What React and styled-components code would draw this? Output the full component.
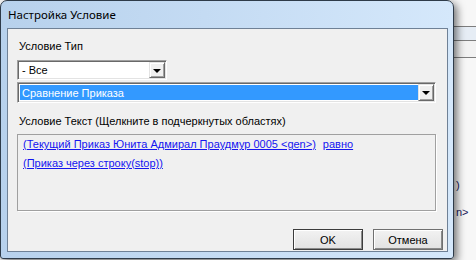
import React from 'react';
import styled, { createGlobalStyle } from 'styled-components';

const Global = createGlobalStyle`
  html, body { margin: 0; padding: 0; background: #f3f3f3; }
  body { font-family: "Liberation Sans", Arial, sans-serif; }
`;

const Desktop = styled.div`
  width: 476px;
  height: 260px;
  overflow: hidden;
  display: flex;
  align-items: flex-start;
  background: #f4f4f4;
`;

const Window = styled.div`
  position: relative;
  z-index: 1;
  flex: 0 0 auto;
  width: 454px;
  height: 259px;
  box-sizing: border-box;
  border: 1px solid #2e3b49;
  border-radius: 7px 7px 3px 3px;
  background: linear-gradient(to right, #b7d1ec 0%, #c4dbf3 45%, #d5e8fb 100%);
  box-shadow: 3px 3px 9px rgba(0, 0, 0, 0.55);
  display: flex;
  flex-direction: column;
  padding: 0 5px 6px 6px;
`;

const TitleBar = styled.div`
  height: 27px;
  display: flex;
  align-items: center;
  padding-left: 1px;
  font-family: "Noto Sans", "Open Sans", sans-serif;
  font-size: 11.5px;
  color: #000;
`;

const Client = styled.div`
  flex: 1;
  border: 1px solid #6f8196;
  background: #f0f0f0;
  display: flex;
  flex-direction: column;
  font-size: 11px;
  color: #000;
`;

const Label = styled.div`
  height: 13px;
  line-height: 13px;
  margin: ${p => p.$top}px 0 0 11px;
  white-space: nowrap;
`;

const Combo = styled.div`
  box-sizing: border-box;
  width: ${p => p.$w}px;
  height: ${p => p.$h}px;
  margin: ${p => p.$top}px 0 0 9px;
  border: 1px solid;
  border-color: #a0a0a0 #ffffff #ffffff #a0a0a0;
  box-shadow: inset 1px 1px 0 #696969, inset -1px -1px 0 #e3e3e3;
  padding: 2px 2px 2px 2px;
  background: #fff;
  display: flex;
  align-items: stretch;
`;

const ComboField = styled.div`
  flex: 1;
  display: flex;
  align-items: center;
  padding-left: 2px;
  white-space: nowrap;
  background: ${p => (p.$selected ? '#3399ff' : '#ffffff')};
  color: ${p => (p.$selected ? '#ffffff' : '#000000')};
`;

const DropButton = styled.div`
  box-sizing: border-box;
  width: 16px;
  flex: 0 0 16px;
  margin: -1px -1px -1px 0;
  background: #f0f0f0;
  border: 1px solid;
  border-color: #e3e3e3 #696969 #696969 #e3e3e3;
  box-shadow: inset 1px 1px 0 #ffffff, inset -1px -1px 0 #a0a0a0;
  display: flex;
  align-items: center;
  justify-content: center;
`;

const Arrow = styled.span`
  width: 0;
  height: 0;
  border-left: 4px solid transparent;
  border-right: 4px solid transparent;
  border-top: 4px solid #000;
  margin-top: 1px;
`;

const TextBox = styled.div`
  box-sizing: border-box;
  width: 419px;
  height: 77px;
  margin: 6px 0 0 9px;
  border: 1px solid #a0a0a0;
  box-shadow: 1px 1px 0 #ffffff;
  padding: 0 0 0 5px;
  line-height: 19px;
`;

const Line = styled.div`
  white-space: nowrap;
`;

const Link = styled.span`
  color: #1515f0;
  text-decoration: underline;
  margin-right: ${p => p.$gap || 0}px;
`;

const ButtonRow = styled.div`
  display: flex;
  justify-content: flex-end;
  gap: 10px;
  margin-top: 18px;
  padding-right: 4px;
`;

const Button = styled.div`
  box-sizing: border-box;
  width: 70px;
  height: 21px;
  display: flex;
  align-items: center;
  justify-content: center;
  border: 1px solid ${p => (p.$default ? '#3c3c3c' : '#707070')};
  box-shadow: inset 1px 1px 0 #ffffff, inset -1px -1px 0 #8a8a8a;
  background: linear-gradient(#f2f2f2, #e2e2e2);
`;

const Strip = styled.div`
  flex: 1;
  height: 260px;
  display: flex;
  flex-direction: column;
  background: #f7f7f7;
  font-size: 11px;
  color: #1a1a5a;
`;

const StripBand = styled.div`
  height: ${p => p.$h}px;
  background: ${p => p.$bg};
  border-bottom: ${p => (p.$line ? '1px solid #7d7d7d' : 'none')};
`;

const StripText = styled.div`
  margin-top: ${p => p.$top}px;
  padding-left: 2px;
  height: 13px;
  line-height: 13px;
  white-space: nowrap;
`;

export default function App() {
  return (
    <>
      <Global />
      <Desktop>
        <Window>
          <TitleBar>Настройка Условие</TitleBar>
          <Client>
            <Label $top={11}>Условие Тип</Label>
            <Combo $w={150} $h={20} $top={7}>
              <ComboField>- Все</ComboField>
              <DropButton><Arrow /></DropButton>
            </Combo>
            <Combo $w={419} $h={21} $top={2}>
              <ComboField $selected>Сравнение Приказа</ComboField>
              <DropButton><Arrow /></DropButton>
            </Combo>
            <Label $top={12}>Условие Текст (Щелкните в подчеркнутых областях)</Label>
            <TextBox>
              <Line>
                <Link $gap={7}>(Текущий Приказ Юнита Адмирал Праудмур 0005 &lt;gen&gt;)</Link>
                <Link>равно</Link>
              </Line>
              <Line>
                <Link>(Приказ через строку(stop))</Link>
              </Line>
            </TextBox>
            <ButtonRow>
              <Button $default>OK</Button>
              <Button>Отмена</Button>
            </ButtonRow>
          </Client>
        </Window>
        <Strip>
          <StripBand $h={26} $bg="#f7f7f7" $line />
          <StripBand $h={13} $bg="#e6edf5" $line />
          <StripBand $h={16} $bg="#f2f2f2" $line />
          <StripText $top={121}>)</StripText>
          <StripText $top={14}>n&gt;</StripText>
        </Strip>
      </Desktop>
    </>
  );
}
